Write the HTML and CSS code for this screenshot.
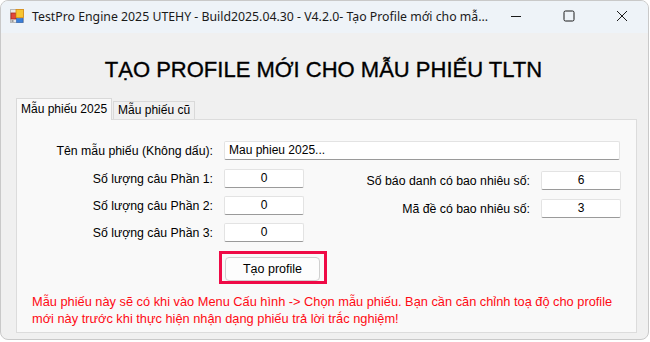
FILE: index.html
```html
<!DOCTYPE html>
<html lang="vi">
<head>
    <meta charset="UTF-8">
    <title>TestPro Engine 2025 UTEHY</title>
    <link rel="stylesheet" href="styles.css">
</head>
<body>
    <div class="window">
        <div class="titlebar">
            <svg class="app-icon" width="14" height="14" viewBox="0 0 14 14">
                <rect x="0.5" y="0.5" width="13" height="13" fill="#e9e9e9" stroke="#b8b8b8"/>
                <rect x="1" y="4" width="5" height="6" fill="#e2463b" stroke="#a8281f" stroke-width="0.8"/>
                <rect x="6" y="0.5" width="7.5" height="8" fill="#f7c531" stroke="#d98b12" stroke-width="0.8"/>
                <rect x="6.5" y="9.5" width="6.5" height="4" fill="#3a7fd8" stroke="#2a5fae" stroke-width="0.6"/>
                <rect x="1.5" y="11" width="2" height="2" fill="#9a9a9a"/>
            </svg>
            <div class="title-text">TestPro Engine 2025 UTEHY - Build2025.04.30 - V4.2.0- Tạo Profile mới cho mẫ...</div>
            <div class="caption-buttons">
                <div class="cap-btn">
                    <svg width="12" height="12" viewBox="0 0 12 12"><path d="M1 6.5h10" stroke="#1a1a1a" stroke-width="1"/></svg>
                </div>
                <div class="cap-btn">
                    <svg width="12" height="12" viewBox="0 0 12 12"><rect x="1" y="1" width="10" height="10" rx="1.5" fill="none" stroke="#1a1a1a" stroke-width="1"/></svg>
                </div>
                <div class="cap-btn">
                    <svg width="12" height="12" viewBox="0 0 12 12"><path d="M1 1L11 11M11 1L1 11" stroke="#1a1a1a" stroke-width="1"/></svg>
                </div>
            </div>
        </div>

        <div class="client">
            <h1 class="heading">TẠO PROFILE MỚI CHO MẪU PHIẾU TLTN</h1>

            <div class="tabs">
                <div class="tab tab-active">Mẫu phiếu 2025</div>
                <div class="tab">Mẫu phiếu cũ</div>
            </div>

            <div class="tab-panel">
                <div class="row name-row">
                    <label class="lbl lbl-left">Tên mẫu phiếu (Không dấu):</label>
                    <div class="input input-wide">Mau phieu 2025...</div>
                </div>

                <div class="columns">
                    <div class="col col-left">
                        <div class="row">
                            <label class="lbl lbl-left">Số lượng câu Phần 1:</label>
                            <div class="input input-num">0</div>
                        </div>
                        <div class="row">
                            <label class="lbl lbl-left">Số lượng câu Phần 2:</label>
                            <div class="input input-num">0</div>
                        </div>
                        <div class="row">
                            <label class="lbl lbl-left">Số lượng câu Phần 3:</label>
                            <div class="input input-num">0</div>
                        </div>
                    </div>
                    <div class="col col-right">
                        <div class="row">
                            <label class="lbl lbl-right">Số báo danh có bao nhiêu số:</label>
                            <div class="input input-num">6</div>
                        </div>
                        <div class="row">
                            <label class="lbl lbl-right">Mã đề có bao nhiêu số:</label>
                            <div class="input input-num">3</div>
                        </div>
                    </div>
                </div>

                <div class="btn-frame">
                    <button class="btn">Tạo profile</button>
                </div>

                <p class="note">Mẫu phiếu này sẽ có khi vào Menu Cấu hình -&gt; Chọn mẫu phiếu. Bạn cần căn chỉnh toạ độ cho profile mới này trước khi thực hiện nhận dạng phiếu trả lời trắc nghiệm!</p>
            </div>
        </div>
    </div>
</body>
</html>
```

FILE: styles.css
```css
* {
    box-sizing: border-box;
}
body {
    margin: 0;
    background: #fff;
    font-family: 'Liberation Sans', Arial, sans-serif;
    color: #000;
}
.window {
    width: 649px;
    height: 340px;
    border: 1px solid #c9c9c9;
    border-radius: 8px;
    overflow: hidden;
    background: #f0f0f0;
    display: flex;
    flex-direction: column;
}
.titlebar {
    height: 32px;
    background: #eef3f8;
    display: flex;
    align-items: center;
    flex-shrink: 0;
}
.app-icon {
    flex-shrink: 0;
    margin-left: 9px;
    margin-top: -2px;
}
.title-text {
    margin-left: 8px;
    font-family: 'Noto Sans', sans-serif;
    font-size: 12.3px;
    color: #1a1a1a;
    white-space: nowrap;
    flex-shrink: 0;
    margin-top: -2px;
}
.caption-buttons {
    display: flex;
    flex-shrink: 0;
    margin-left: auto;
    margin-right: 0;
}
.cap-btn {
    width: 53px;
    height: 32px;
    display: flex;
    align-items: center;
    justify-content: center;
    margin-top: -2px;
}
.client {
    flex: 1;
    display: flex;
    flex-direction: column;
    padding: 0 11px 6px 15px;
}
.heading {
    margin: 20px 0 0 0;
    text-align: center;
    font-size: 22px;
    font-weight: normal;
    -webkit-text-stroke: 0.35px #000;
    height: 34px;
    line-height: 34px;
    padding-right: 6px;
}
.tabs {
    display: flex;
    align-items: flex-end;
    height: 21px;
    margin-top: 11px;
    position: relative;
    z-index: 1;
}
.tab {
    font-size: 12px;
    height: 18px;
    line-height: 16px;
    padding: 0 4px;
    border: 1px solid #d9d9d9;
    border-bottom: none;
    background: #f0f0f0;
    margin-left: -1px;
}
.tab-active {
    line-height: 20px;
    padding: 0 4px;
    background: #f9f9f9;
    margin-left: 0;
    margin-right: 2px;
    margin-bottom: -1px;
    height: 22px;
}
.tab-panel {
    flex: 1;
    background: #f9f9f9;
    border: 1px solid #dcdcdc;
    padding: 21px 14px 0 0;
}
.row {
    display: flex;
    align-items: center;
    height: 19px;
}
.lbl {
    font-size: 12.3px;
    text-align: right;
    padding-right: 11px;
    flex-shrink: 0;
}
.lbl-left {
    width: 207px;
}
.lbl-right {
    width: 237px;
}
.input {
    height: 19px;
    background: #fff;
    border: 1px solid #e3e3e3;
    border-bottom-color: #9a9a9a;
    border-radius: 2px;
    font-size: 12px;
    line-height: 17px;
}
.input-wide {
    width: 396px;
    padding-left: 4px;
}
.input-num {
    width: 80px;
    text-align: center;
}
.columns {
    display: flex;
    margin-top: 9px;
}
.col {
    display: flex;
    flex-direction: column;
}
.col-left {
    gap: 8px;
}
.col-right {
    gap: 9px;
    margin-top: 2px;
}
.btn-frame {
    margin: 9px 0 0 202px;
    width: 108px;
    height: 33px;
    border: 3px solid #ef0a46;
    padding: 3px 4px 3px 3px;
}
.btn {
    display: block;
    width: 95px;
    height: 24px;
    background: #fdfdfd;
    border: 1px solid #d0d0d0;
    border-radius: 4px;
    font-family: 'Liberation Sans', Arial, sans-serif;
    font-size: 12.5px;
    color: #000;
    padding: 0;
}
.note {
    margin: 9px 0 0 15px;
    color: #ff0a14;
    font-size: 12.8px;
    line-height: 17px;
    width: 592px;
}
```
